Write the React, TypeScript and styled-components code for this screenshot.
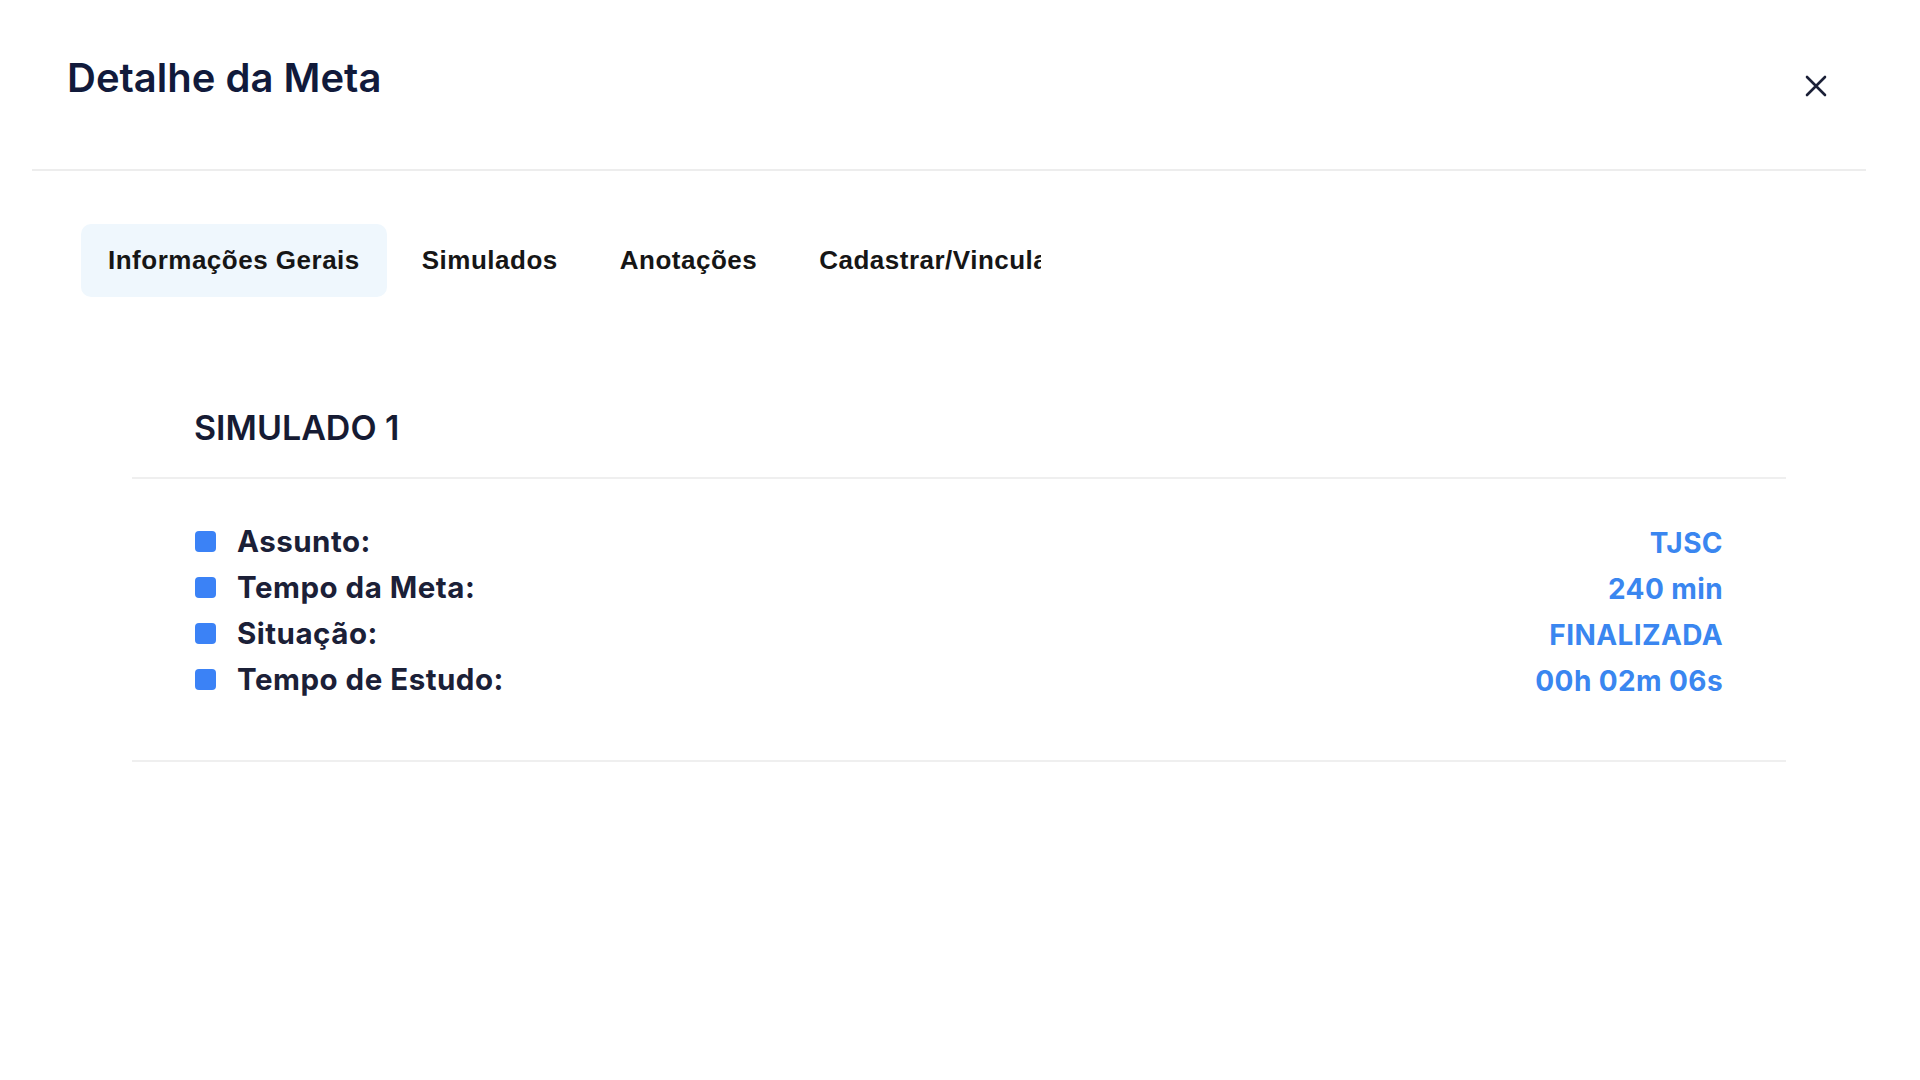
import styled, { createGlobalStyle } from "styled-components";

const GlobalStyle = createGlobalStyle`
	* {
		box-sizing: border-box;
	}
	body {
		margin: 0;
		background: #ffffff;
		font-family: Inter, "Noto Sans", "Liberation Sans", sans-serif;
	}
`;

const Modal = styled.div`
	width: 1834px;
	margin-left: 32px;
	min-height: 1080px;
	background: #ffffff;
`;

const Header = styled.header`
	height: 171px;
	padding: 54px 30px 0 35px;
	display: flex;
	justify-content: space-between;
	align-items: flex-start;
	border-bottom: 2px solid #ededed;
`;

const Title = styled.h1`
	margin: 0;
	font-size: 40px;
	line-height: 48px;
	font-weight: 600;
	color: #111a3b;
`;

const CloseButton = styled.button`
	width: 40px;
	height: 40px;
	margin-top: 12px;
	padding: 0;
	border: none;
	background: transparent;
	display: flex;
	align-items: center;
	justify-content: center;
	cursor: pointer;
	color: #1b2037;
`;

const Body = styled.div`
	padding: 53px 80px 0 0;
`;

const TabList = styled.nav`
	width: 960px;
	margin-left: 49px;
	display: flex;
	gap: 8px;
	overflow: hidden;
`;

const Tab = styled.button<{ $active?: boolean }>`
	flex-shrink: 0;
	height: 73px;
	padding: 0 27px;
	border: none;
	border-radius: 10px;
	background: ${(p) => (p.$active ? "#eff7fd" : "transparent")};
	font-family: "Liberation Sans", Arial, sans-serif;
	font-size: 26px;
	font-weight: 700;
	letter-spacing: 0.5px;
	color: #161616;
	white-space: nowrap;
	cursor: pointer;
`;

const Section = styled.section`
	margin: 110px 0 0 100px;
	border-bottom: 2px solid #efefef;
	padding-bottom: 58px;
`;

const SectionTitle = styled.h2`
	margin: 0;
	padding: 0 62px 29px;
	border-bottom: 2px solid #efefef;
	font-size: 34px;
	line-height: 41px;
	font-weight: 600;
	color: #161b33;
`;

const InfoList = styled.ul`
	list-style: none;
	margin: 39px 0 0;
	padding: 0 63px;
`;

const InfoRow = styled.li`
	display: flex;
	align-items: center;
	height: 46px;
`;

const Bullet = styled.span`
	width: 21px;
	height: 21px;
	border-radius: 4px;
	background: #3b82f6;
	flex-shrink: 0;
	margin-right: 21px;
`;

const Label = styled.span`
	flex: 1;
	font-size: 29.5px;
	font-weight: 700;
	letter-spacing: 0.5px;
	color: #1b2037;
`;

const Value = styled.span`
	font-size: 28px;
	font-weight: 700;
	letter-spacing: 0.4px;
	color: #3a86f0;
	padding-top: 3px;
`;

const tabs = ["Informações Gerais", "Simulados", "Anotações", "Cadastrar/Vincular Questões"];

const info = [
	{ label: "Assunto:", value: "TJSC" },
	{ label: "Tempo da Meta:", value: "240 min" },
	{ label: "Situação:", value: "FINALIZADA" },
	{ label: "Tempo de Estudo:", value: "00h 02m 06s" },
];

const App = () => {
	return (
		<>
			<GlobalStyle />
			<Modal>
				<Header>
					<Title>Detalhe da Meta</Title>
					<CloseButton aria-label="Fechar">
						<svg width="22" height="22" viewBox="0 0 22 22">
							<path
								d="M2 2 L20 20 M20 2 L2 20"
								stroke="currentColor"
								strokeWidth="2.6"
								strokeLinecap="round"
							/>
						</svg>
					</CloseButton>
				</Header>
				<Body>
					<TabList>
						{tabs.map((t, i) => (
							<Tab key={t} $active={i === 0}>
								{t}
							</Tab>
						))}
					</TabList>
					<Section>
						<SectionTitle>SIMULADO 1</SectionTitle>
						<InfoList>
							{info.map((row) => (
								<InfoRow key={row.label}>
									<Bullet />
									<Label>{row.label}</Label>
									<Value>{row.value}</Value>
								</InfoRow>
							))}
						</InfoList>
					</Section>
				</Body>
			</Modal>
		</>
	);
};

export default App;
